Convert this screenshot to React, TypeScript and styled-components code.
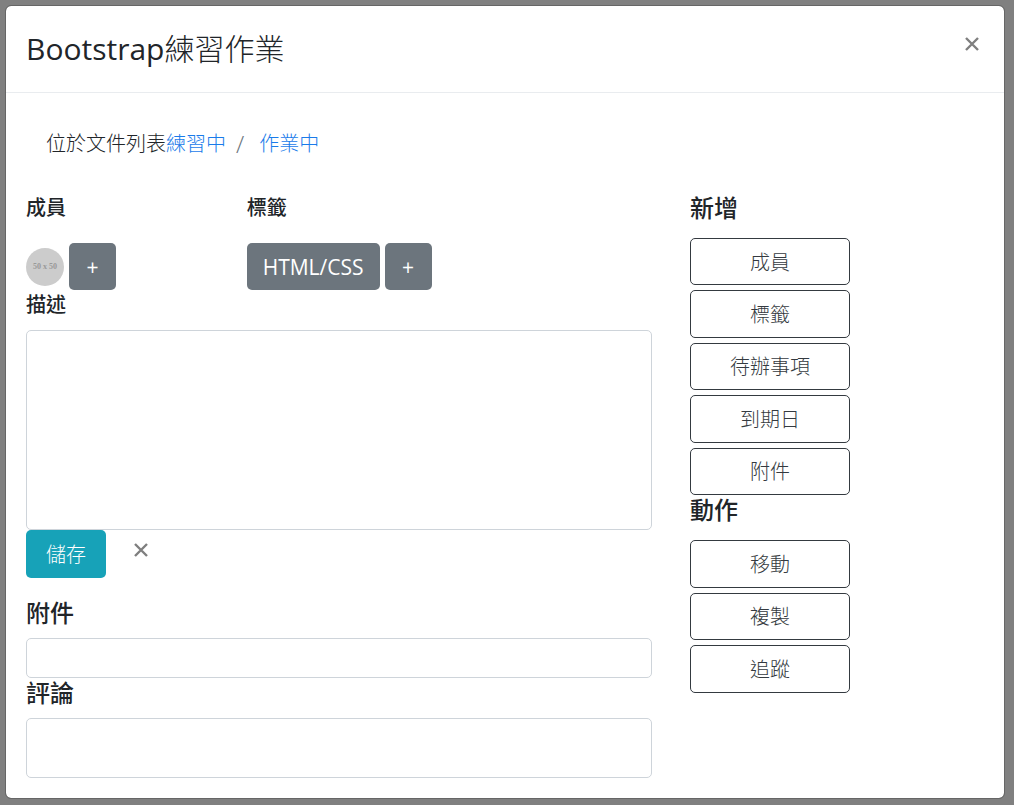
import React from "react";
import styled, { createGlobalStyle } from "styled-components";

const GlobalStyle = createGlobalStyle`
  *, *::before, *::after { box-sizing: border-box; }
  body {
    margin: 0;
    background: #808080;
    color: #212529;
    font-family: "Open Sans", "Noto Sans CJK TC", sans-serif;
    font-size: 20px;
    font-weight: 300;
    line-height: 30px;
  }
  button, input, textarea { font: inherit; }
`;

const Page = styled.div`
  min-height: 100vh;
  padding: 5px 9px 6px 5px;
`;

const Modal = styled.main`
  background: #fff;
  background-clip: padding-box;
  border: 1px solid #666;
  border-radius: 6px;
`;

const Header = styled.header`
  display: flex;
  justify-content: space-between;
  align-items: flex-start;
  padding: 20px;
  border-bottom: 1px solid #e9ecef;
`;

const Title = styled.h1`
  margin: 0;
  font-size: 30px;
  line-height: 46px;
  font-weight: 300;
`;

const TitleLatin = styled.span`
  font-weight: 400;
`;

const IconButton = styled.button<{ $height: number }>`
  display: grid;
  place-items: center;
  width: 24px;
  height: ${(p) => p.$height}px;
  padding: 0;
  border: 0;
  background: transparent;
  color: #7f7f7f;
  cursor: pointer;
`;

const Breadcrumb = styled.nav`
  display: flex;
  flex-wrap: wrap;
  margin: 20px;
  padding: 16px 20px 14px;
`;

const Crumb = styled.a`
  color: #1a7bea;
  text-decoration: none;
`;

const Divider = styled.span`
  padding: 0 15px 0 10px;
  color: #6c757d;
  font-size: 24px;
`;

const Columns = styled.div`
  display: grid;
  grid-template-columns: 2fr 1fr;
  padding: 0 2px 20px 0;
`;

const Column = styled.section`
  min-width: 0;
  padding: 0 18px 0 20px;
`;

const Summary = styled.div`
  display: grid;
  grid-template-columns: 1fr 2fr;
  gap: 18px;
`;

const Heading = styled.h2<{ $small?: boolean }>`
  margin: 0 0 ${(p) => (p.$small ? 20 : 10)}px;
  font-size: ${(p) => (p.$small ? 20 : 24)}px;
  line-height: 30px;
  font-weight: 500;
`;

const Label = styled.label<{ $small?: boolean }>`
  display: block;
  margin-bottom: 10px;
  font-size: ${(p) => (p.$small ? 20 : 24)}px;
  font-weight: 500;
`;

const Row = styled.div`
  display: flex;
  align-items: center;
  gap: 5px;
`;

const Avatar = styled.span`
  display: grid;
  place-items: center;
  width: 38px;
  height: 38px;
  border-radius: 50%;
  background: #ccc;
  color: #999;
  font: 700 8px/10px "Liberation Serif", serif;
`;

const Button = styled.button<{ $tone?: "info" }>`
  height: ${(p) => (p.$tone ? 48 : 47)}px;
  min-width: 47px;
  padding: ${(p) => (p.$tone ? "2px 20px 0" : "0 16px")};
  border: 0;
  border-radius: 5px;
  background: ${(p) => (p.$tone ? "#17a2b8" : "#6c757d")};
  color: #fff;
  font-size: ${(p) => (p.$tone ? 20 : 21)}px;
  font-weight: ${(p) => (p.$tone ? 300 : 400)};
  cursor: pointer;
`;

const SaveRow = styled.div`
  display: flex;
  align-items: flex-start;
  gap: 23px;
  margin-bottom: 20px;
`;

const Field = styled.input<{ $height: number }>`
  display: block;
  width: 100%;
  height: ${(p) => p.$height}px;
  padding: 7px 15px;
  border: 1px solid #ced4da;
  border-radius: 5px;
  background: #fff;
`;

const TextArea = styled(Field).attrs({ as: "textarea" })`
  resize: none;
`;

const ActionList = styled.div<{ $height: number }>`
  display: grid;
  grid-auto-rows: 1fr;
  gap: 5px;
  width: 160px;
  min-height: ${(p) => p.$height}px;
  margin-top: 15px;
`;

const ActionButton = styled.button`
  padding: 2px 15px 0;
  border: 1px solid #343a40;
  border-radius: 5px;
  background: transparent;
  color: #343a40;
  cursor: pointer;
`;

const Cross = () => (
  <svg width="14" height="14" viewBox="0 0 14 14" aria-hidden="true">
    <path d="M1 1 13 13M13 1 1 13" fill="none" stroke="currentColor" strokeWidth="2.4" />
  </svg>
);

const additions = ["成員", "標籤", "待辦事項", "到期日", "附件"];
const actions = ["移動", "複製", "追蹤"];

export default function App() {
  return (
    <Page lang="zh-Hant">
      <GlobalStyle />
      <Modal>
        <Header>
          <Title>
            <TitleLatin>Bootstrap</TitleLatin>練習作業
          </Title>
          <IconButton type="button" aria-label="關閉" $height={36}>
            <Cross />
          </IconButton>
        </Header>

        <Breadcrumb>
          <span>位於文件列表</span>
          <Crumb href="#practice">練習中</Crumb>
          <Divider>/</Divider>
          <Crumb href="#homework">作業中</Crumb>
        </Breadcrumb>

        <Columns>
          <Column>
            <Summary>
              <div>
                <Heading $small>成員</Heading>
                <Row>
                  <Avatar>50 x 50</Avatar>
                  <Button type="button">+</Button>
                </Row>
              </div>
              <div>
                <Heading $small>標籤</Heading>
                <Row>
                  <Button type="button">HTML/CSS</Button>
                  <Button type="button">+</Button>
                </Row>
              </div>
            </Summary>

            <Label $small htmlFor="description">描述</Label>
            <TextArea id="description" $height={200} />
            <SaveRow>
              <Button type="button" $tone="info">儲存</Button>
              <IconButton type="button" aria-label="取消" $height={40}>
                <Cross />
              </IconButton>
            </SaveRow>

            <Label htmlFor="attachment">附件</Label>
            <Field id="attachment" type="text" $height={40} />
            <Label htmlFor="comment">評論</Label>
            <Field id="comment" type="text" $height={60} />
          </Column>

          <Column>
            <Heading>新增</Heading>
            <ActionList $height={257}>
              {additions.map((name) => (
                <ActionButton type="button" key={name}>{name}</ActionButton>
              ))}
            </ActionList>
            <Heading>動作</Heading>
            <ActionList $height={153}>
              {actions.map((name) => (
                <ActionButton type="button" key={name}>{name}</ActionButton>
              ))}
            </ActionList>
          </Column>
        </Columns>
      </Modal>
    </Page>
  );
}
